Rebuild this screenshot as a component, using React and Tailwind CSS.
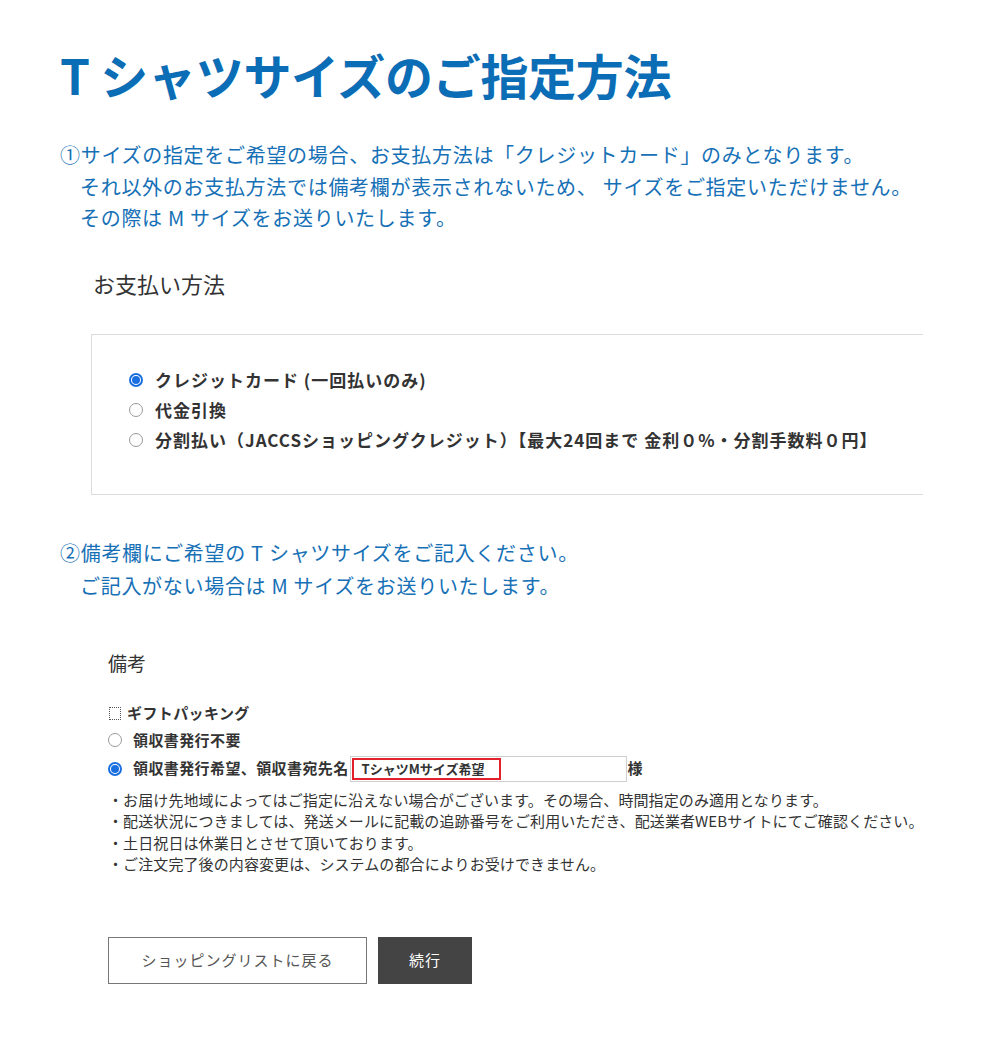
import React from 'react';

const jp = { fontFamily: '"Noto Sans CJK JP", "Noto Sans", sans-serif' };

function Radio({ checked }) {
  if (checked) {
    return (
      <span className="w-[14px] h-[14px] rounded-full border-2 border-[#1a6fe0] bg-white flex items-center justify-center shrink-0">
        <span className="w-[8px] h-[8px] rounded-full bg-[#1a6fe0]" />
      </span>
    );
  }
  return <span className="w-[14px] h-[14px] rounded-full border border-[#9a9a9a] bg-white shrink-0" />;
}

const payments = [
  { label: 'クレジットカード (一回払いのみ)', checked: true },
  { label: '代金引換', checked: false },
  { label: '分割払い（JACCSショッピングクレジット）【最大24回まで 金利０%・分割手数料０円】', checked: false },
];

const notes = [
  '・お届け先地域によってはご指定に沿えない場合がございます。その場合、時間指定のみ適用となります。',
  '・配送状況につきましては、発送メールに記載の追跡番号をご利用いただき、配送業者WEBサイトにてご確認ください。',
  '・土日祝日は休業日とさせて頂いております。',
  '・ご注文完了後の内容変更は、システムの都合によりお受けできません。',
];

export default function App() {
  return (
    <div className="min-h-screen bg-white w-[1002px] overflow-hidden" style={jp}>
      <div className="pl-[60px] pt-[50px] pb-[55px]">
        <h1 className="text-[48px] leading-[48px] font-bold text-[#0a6db5] tracking-[-0.3px]">T シャツサイズのご指定方法</h1>

        <div className="mt-[41px] text-[20px] leading-[31.5px] text-[#1670b6] tracking-[0.7px]">
          <p>①サイズの指定をご希望の場合、お支払方法は「クレジットカード」のみとなります。</p>
          <p className="pl-[20px]">それ以外のお支払方法では備考欄が表示されないため、 サイズをご指定いただけません。</p>
          <p className="pl-[20px]">その際は M サイズをお送りいたします。</p>
        </div>

        <h2 className="mt-[34px] ml-[33px] text-[22px] leading-[30px] text-[#333]">お支払い方法</h2>

        <div className="mt-[36px] ml-[31px] w-[832px] border-l border-t border-b border-[#dcdcdc] pt-[30px] pb-[39px] pl-[37px]">
          {payments.map((p) => (
            <div key={p.label} className="flex items-center h-[30px] gap-[12px]">
              <Radio checked={p.checked} />
              <span className="text-[17px] font-bold text-[#333] tracking-[1px]">{p.label}</span>
            </div>
          ))}
        </div>

        <div className="mt-[41px] text-[20px] leading-[33px] text-[#1670b6] tracking-[0.7px]">
          <p>②備考欄にご希望の T シャツサイズをご記入ください。</p>
          <p className="pl-[20px]">ご記入がない場合は M サイズをお送りいたします。</p>
        </div>

        <div className="pl-[48px]">
          <h3 className="mt-[47px] text-[19px] leading-[28px] text-[#333]">備考</h3>

          <div className="mt-[24px] text-[15px] font-bold text-[#333] tracking-[0.4px]">
            <div className="flex items-center h-[26px] gap-[6px]">
              <span className="w-[12px] h-[13px] border border-dotted border-[#555] ml-[1px] shrink-0" />
              <span>ギフトパッキング</span>
            </div>
            <div className="flex items-center h-[27px] gap-[11px]">
              <Radio checked={false} />
              <span>領収書発行不要</span>
            </div>
            <div className="flex items-center h-[30px] gap-[11px]">
              <Radio checked />
              <span>領収書発行希望、領収書宛先名</span>
              <div className="-ml-[10px] w-[277px] h-[26px] border border-[#cfcfcf] bg-white flex items-center px-[1px]">
                <span className="h-[22px] w-[149px] border-2 border-[#e21f2a] flex items-center pl-[8px] text-[13px] tracking-normal">TシャツMサイズ希望</span>
              </div>
              <span className="-ml-[10px]">様</span>
            </div>
          </div>

          <div className="mt-[5px] text-[15px] leading-[21.5px] text-[#333] tracking-[0.1px]">
            {notes.map((n) => (
              <p key={n}>{n}</p>
            ))}
          </div>

          <div className="mt-[62px] flex gap-[11px]">
            <button className="w-[259px] h-[47px] border border-[#777] bg-white text-[15px] text-[#555] tracking-[1px]">ショッピングリストに戻る</button>
            <button className="w-[94px] h-[47px] bg-[#444] text-[15px] text-white tracking-[1px]">続行</button>
          </div>
        </div>
      </div>
    </div>
  );
}
